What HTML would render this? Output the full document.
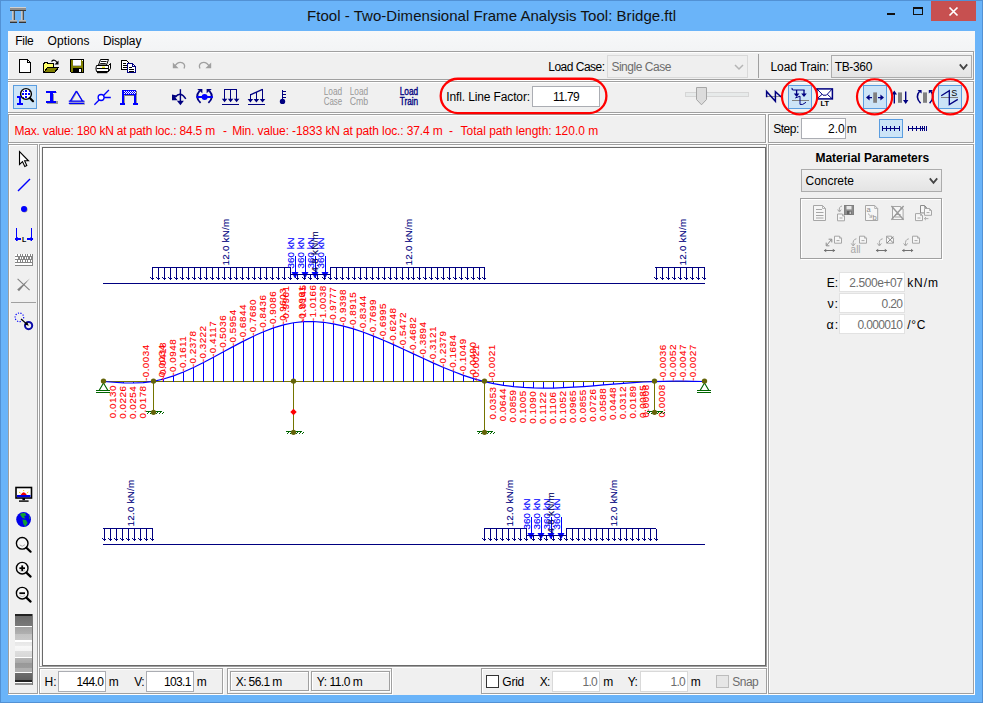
<!DOCTYPE html>
<html><head><meta charset="utf-8"><title>Ftool</title>
<style>
html,body{margin:0;padding:0;}
body{width:983px;height:703px;overflow:hidden;background:#6ab4f9;font-family:"Liberation Sans",sans-serif;}
#win{position:absolute;left:0;top:0;width:983px;height:703px;overflow:hidden;background:#6ab4f9;box-shadow:inset 0 0 0 1px #5291d4;}
#win *{position:absolute;box-sizing:border-box;}
.t{white-space:nowrap;line-height:20px;height:20px;}
.pg{border:1px solid #a0a0a0;}
.pw{border:1px solid #fff;}
.client{background:#f0f0f0;}
.menu{background:linear-gradient(#f7f8f9,#f3f4f5);}
.inp{background:#fff;border:1px solid #abadb3;}
.inpd{background:#fff;border:1px solid #d9d9d9;}
.sel{background:#cce4f7;border:1px solid #5a9de0;}
.combo{background:linear-gradient(#f2f2f2,#e4e4e4);border:1px solid #acacac;}
.combod{background:#efefef;border:1px solid #d9d9d9;}
.sunk{border:1px solid;border-color:#a0a0a0 #fff #fff #a0a0a0;}
.a{overflow:visible;}

</style></head>
<body>
<div id="win">
<span class="t" id="t1" style="top:6px;font-size:15px;color:#111;letter-spacing:0.037px;left:307.00px;">Ftool - Two-Dimensional Frame Analysis Tool: Bridge.ftl</span>
<div class="x" style="left:931px;top:1px;width:45px;height:20px;background:#c75050;"></div>
<svg class="a" style="left:931px;top:1px" width="45" height="20" viewBox="0 0 45 20" ><path d="M18.5 6.5 L26.5 14.5 M26.5 6.5 L18.5 14.5" stroke="#fff" stroke-width="1.7" fill="none"/></svg>
<div class="x" style="left:887px;top:13px;width:8px;height:2px;background:#111;"></div>
<div class="x" style="left:913px;top:7px;width:10px;height:8px;border:1px solid #111;border-top-width:2px;"></div>
<div class="client" style="left:8px;top:31px;width:967px;height:664px;"></div>
<div class="menu" style="left:8px;top:31px;width:967px;height:20px;"></div>
<span class="t" id="t2" style="top:31px;font-size:12px;color:#000;letter-spacing:-0.281px;left:15.30px;">File</span>
<span class="t" id="t3" style="top:31px;font-size:12px;color:#000;letter-spacing:0.123px;left:47.50px;">Options</span>
<span class="t" id="t4" style="top:31px;font-size:12px;color:#000;letter-spacing:-0.160px;left:103.00px;">Display</span>
<div class="pw" style="left:8px;top:52px;width:967px;height:29px"></div>
<div class="pg" style="left:7px;top:51px;width:967px;height:29px"></div>
<div class="pw" style="left:8px;top:82px;width:967px;height:32px"></div>
<div class="pg" style="left:7px;top:81px;width:967px;height:32px"></div>
<div class="pw" style="left:9px;top:115px;width:758px;height:29px"></div>
<div class="pg" style="left:8px;top:114px;width:758px;height:29px"></div>
<div class="pw" style="left:769px;top:115px;width:206px;height:29px"></div>
<div class="pg" style="left:768px;top:114px;width:206px;height:29px"></div>
<div class="pw" style="left:9px;top:145px;width:30px;height:550px"></div>
<div class="pg" style="left:8px;top:144px;width:30px;height:550px"></div>
<div class="pw" style="left:40px;top:145px;width:728px;height:523px"></div>
<div class="pg" style="left:39px;top:144px;width:728px;height:523px"></div>
<div class="pw" style="left:769px;top:145px;width:206px;height:550px"></div>
<div class="pg" style="left:768px;top:144px;width:206px;height:550px"></div>
<div class="pw" style="left:40px;top:669px;width:184px;height:26px"></div>
<div class="pg" style="left:39px;top:668px;width:184px;height:26px"></div>
<div class="pw" style="left:228px;top:669px;width:165px;height:26px"></div>
<div class="pg" style="left:227px;top:668px;width:165px;height:26px"></div>
<div class="pw" style="left:482px;top:669px;width:286px;height:26px"></div>
<div class="pg" style="left:481px;top:668px;width:286px;height:26px"></div>
<div class="x" style="left:7px;top:31px;width:1px;height:664px;background:#6ab4f9;"></div>
<div class="cv" style="left:42px;top:147px;width:724px;height:519px;background:#fff;border:1px solid #696969;"></div>
<span class="t" id="t5" style="top:121px;font-size:12px;color:#ff0000;letter-spacing:-0.195px;left:14.50px;">Max. value: 180 kN at path loc.: 84.5 m</span>
<span class="t" id="t6" style="top:121px;font-size:12px;color:#ff0000;left:223.00px;">-</span>
<span class="t" id="t7" style="top:121px;font-size:12px;color:#ff0000;letter-spacing:-0.121px;left:232.20px;">Min. value: -1833 kN at path loc.: 37.4 m</span>
<span class="t" id="t8" style="top:121px;font-size:12px;color:#ff0000;left:449.00px;">-</span>
<span class="t" id="t9" style="top:121px;font-size:12px;color:#ff0000;letter-spacing:-0.020px;left:460.60px;">Total path length: 120.0 m</span>
<span class="t" id="t10" style="top:57px;font-size:12px;color:#000;letter-spacing:-0.510px;left:548.30px;">Load Case:</span>
<div class="combod" style="left:607px;top:55px;width:141px;height:23px;"></div>
<span class="t" id="t11" style="top:57px;font-size:12px;color:#6d6d6d;letter-spacing:-0.472px;left:611.40px;">Single Case</span>
<svg class="a" style="left:733px;top:62px" width="12" height="10" viewBox="0 0 12 10" ><path d="M2 3 L6 7 L10 3" stroke="#b5b5b5" stroke-width="1.5" fill="none"/></svg>
<div class="x" style="left:758px;top:54px;width:1px;height:24px;background:#a0a0a0;"></div>
<span class="t" id="t12" style="top:57px;font-size:12px;color:#000;letter-spacing:-0.145px;left:770.60px;">Load Train:</span>
<div class="combo" style="left:831px;top:55px;width:141px;height:23px;"></div>
<span class="t" id="t13" style="top:57px;font-size:12px;color:#000;letter-spacing:-0.332px;left:834.70px;">TB-360</span>
<svg class="a" style="left:957px;top:62px" width="12" height="10" viewBox="0 0 12 10" ><path d="M2.8 2.4 L6.5 6.9 L10.2 2.4" stroke="#444" stroke-width="1.8" fill="none"/></svg>
<span class="t" id="t14" style="top:87px;font-size:12px;color:#000;letter-spacing:-0.132px;left:446.30px;">Infl. Line Factor:</span>
<div class="inp" style="left:532px;top:86px;width:68px;height:21px;"></div>
<span class="t" id="t15" style="top:87px;font-size:12px;color:#000;letter-spacing:-0.635px;left:553.00px;">11.79</span>
<svg class="a" style="left:0px;top:0px" width="983" height="703" viewBox="0 0 983 703" ><rect x="440.7" y="78.75" width="165.7" height="34.3" rx="17.15" fill="none" stroke="#ff0000" stroke-width="2.3"/></svg>
<div class="x" style="left:685px;top:92px;width:64px;height:5px;background:#e7eaea;border:1px solid #d6d6d6;"></div>
<svg class="a" style="left:696px;top:87px" width="12" height="19" viewBox="0 0 12 19" ><path d="M0.5 0.5 H10.5 V12.5 L5.5 17.8 L0.5 12.5 Z" fill="#dcdcdc" stroke="#a6a6a6" stroke-width="1"/></svg>
<div class="sel" style="left:13px;top:85px;width:24px;height:24px;"></div>
<div class="sel" style="left:788px;top:85px;width:24px;height:24px;"></div>
<div class="sel" style="left:863px;top:85px;width:24px;height:24px;"></div>
<div class="sel" style="left:938px;top:85px;width:24px;height:24px;"></div>
<span class="t" id="t16" style="top:119px;font-size:12px;color:#000;letter-spacing:-0.458px;left:773.20px;">Step:</span>
<div class="inp" style="left:801px;top:118px;width:45px;height:21px;"></div>
<span class="t" id="t17" style="top:119px;font-size:12px;color:#000;letter-spacing:0.056px;right:138.24px;">2.0</span>
<span class="t" id="t18" style="top:119px;font-size:12px;color:#000;left:846.70px;">m</span>
<div class="sel" style="left:879px;top:119px;width:24px;height:19px;"></div>
<span class="t" id="t19" style="top:148px;font-size:12px;color:#000;letter-spacing:-0.027px;font-weight:bold;left:815.50px;">Material Parameters</span>
<div class="combo" style="left:801px;top:169px;width:141px;height:23px;"></div>
<span class="t" id="t20" style="top:171px;font-size:12px;color:#000;letter-spacing:-0.029px;left:805.50px;">Concrete</span>
<svg class="a" style="left:927px;top:176px" width="12" height="10" viewBox="0 0 12 10" ><path d="M2.8 2.4 L6.5 6.9 L10.2 2.4" stroke="#444" stroke-width="1.8" fill="none"/></svg>
<div class="x" style="left:800px;top:198px;width:142px;height:61px;border:1px solid #a0a0a0;box-shadow:1px 1px 0 #fff, inset 1px 1px 0 #fff;"></div>
<div class="inpd" style="left:839px;top:272px;width:66px;height:20px;border-color:#e2e2e2;"></div>
<span class="t" id="t21" style="top:273px;font-size:12px;color:#000;right:144.90px;">E:</span>
<span class="t" id="t22" style="top:273px;font-size:12px;color:#6d6d6d;letter-spacing:-0.420px;right:80.42px;">2.500e+07</span>
<span class="t" id="t23" style="top:273px;font-size:12px;color:#000;letter-spacing:0.900px;left:907.20px;">kN/m</span>
<div class="inpd" style="left:839px;top:293px;width:66px;height:20px;border-color:#e2e2e2;"></div>
<span class="t" id="t24" style="top:294px;font-size:12.5px;color:#000;letter-spacing:0.900px;right:144.00px;">&#957;:</span>
<span class="t" id="t25" style="top:294px;font-size:12px;color:#6d6d6d;letter-spacing:-0.653px;right:80.65px;">0.20</span>
<div class="inpd" style="left:839px;top:314px;width:66px;height:20px;border-color:#e2e2e2;"></div>
<span class="t" id="t26" style="top:315px;font-size:12.5px;color:#000;letter-spacing:0.900px;right:144.00px;">&#945;:</span>
<span class="t" id="t27" style="top:315px;font-size:12px;color:#6d6d6d;letter-spacing:-0.638px;right:80.64px;">0.000010</span>
<span class="t" id="t28" style="top:315px;font-size:12px;color:#000;letter-spacing:0.744px;left:907.20px;">/&deg;C</span>
<span class="t" id="t29" style="top:672px;font-size:12px;color:#000;left:44.50px;">H:</span>
<div class="inp" style="left:58px;top:671px;width:48px;height:21px;"></div>
<span class="t" id="t30" style="top:672px;font-size:12px;color:#000;letter-spacing:-0.700px;right:879.90px;">144.0</span>
<span class="t" id="t31" style="top:672px;font-size:12px;color:#000;left:108.80px;">m</span>
<span class="t" id="t32" style="top:672px;font-size:12px;color:#000;letter-spacing:-0.700px;left:134.30px;">V:</span>
<div class="inp" style="left:146px;top:671px;width:48px;height:21px;"></div>
<span class="t" id="t33" style="top:672px;font-size:12px;color:#000;letter-spacing:-0.700px;right:792.40px;">103.1</span>
<span class="t" id="t34" style="top:672px;font-size:12px;color:#000;left:196.70px;">m</span>
<div class="pw" style="left:231px;top:672px;width:79px;height:20px"></div>
<div class="pg" style="left:230px;top:671px;width:79px;height:20px"></div>
<span class="t" id="t35" style="top:672px;font-size:12px;color:#000;letter-spacing:-0.620px;left:235.80px;">X: 56.1 m</span>
<div class="pw" style="left:312px;top:672px;width:79px;height:20px"></div>
<div class="pg" style="left:311px;top:671px;width:79px;height:20px"></div>
<span class="t" id="t36" style="top:672px;font-size:12px;color:#000;letter-spacing:-0.477px;left:316.80px;">Y: 11.0 m</span>
<div class="x" style="left:486px;top:675px;width:13px;height:13px;background:#fff;border:1px solid #333;"></div>
<span class="t" id="t37" style="top:672px;font-size:12px;color:#000;letter-spacing:-0.224px;left:502.30px;">Grid</span>
<span class="t" id="t38" style="top:672px;font-size:12px;color:#000;letter-spacing:-0.700px;left:539.80px;">X:</span>
<div class="inpd" style="left:552px;top:671px;width:48px;height:21px;"></div>
<span class="t" id="t39" style="top:672px;font-size:12px;color:#6d6d6d;letter-spacing:-0.700px;right:385.90px;">1.0</span>
<span class="t" id="t40" style="top:672px;font-size:12px;color:#000;left:603.30px;">m</span>
<span class="t" id="t41" style="top:672px;font-size:12px;color:#000;letter-spacing:-0.688px;left:627.80px;">Y:</span>
<div class="inpd" style="left:640px;top:671px;width:48px;height:21px;"></div>
<span class="t" id="t42" style="top:672px;font-size:12px;color:#6d6d6d;letter-spacing:-0.700px;right:297.90px;">1.0</span>
<span class="t" id="t43" style="top:672px;font-size:12px;color:#000;left:690.80px;">m</span>
<div class="x" style="left:716px;top:675px;width:13px;height:13px;background:#e6e6e6;border:1px solid #bcbcbc;"></div>
<span class="t" id="t44" style="top:672px;font-size:12px;color:#6d6d6d;letter-spacing:-0.510px;left:732.30px;">Snap</span>
<div style="left:15px;top:614px;width:18px;height:71px;background:linear-gradient(to bottom,#222 0.0%,#222 3.5%,#6c6c6c 3.5%,#7a7a7a 17.0%,#fff 17.0%,#fff 19.0%,#a4a4a4 19.0%,#b0b0b0 28.0%,#c2c2c2 28.0%,#c8c8c8 37.0%,#fff 37.0%,#fff 39.0%,#e6e6e6 39.0%,#ececec 45.0%,#f8f8f8 45.0%,#f4f4f4 52.0%,#dedede 52.0%,#d8d8d8 60.0%,#fff 60.0%,#fff 62.0%,#b4b4b4 62.0%,#a8a8a8 69.0%,#989898 69.0%,#9c9c9c 76.0%,#b0b0b0 76.0%,#b0b0b0 81.0%,#fff 81.0%,#fff 83.0%,#6e6e6e 83.0%,#606060 93.0%,#222 93.0%,#222 95.5%,#fff 95.5%,#fff 97.5%,#909090 97.5%,#909090 100.0%);border-right:1px solid #7a7a7a;"></div>
<svg class="a" style="left:0;top:0" width="983" height="703" viewBox="0 0 983 703"><g shape-rendering="crispEdges"><rect x="10" y="7" width="16" height="4" fill="#8e8e8e" stroke="none" stroke-width="1" /><rect x="10" y="7" width="16" height="1" fill="#d0d0d0" stroke="none" stroke-width="1" /><rect x="10" y="10" width="16" height="1" fill="#3a3a3a" stroke="none" stroke-width="1" /><rect x="12" y="11" width="3.2" height="9" fill="#a2a2a2" stroke="none" stroke-width="1" /><rect x="12" y="11" width="1" height="9" fill="#c8c8c8" stroke="none" stroke-width="1" /><rect x="14.4" y="11" width="0.8" height="9" fill="#505050" stroke="none" stroke-width="1" /><rect x="21" y="11" width="3.2" height="9" fill="#a2a2a2" stroke="none" stroke-width="1" /><rect x="21" y="11" width="1" height="9" fill="#c8c8c8" stroke="none" stroke-width="1" /><rect x="23.4" y="11" width="0.8" height="9" fill="#505050" stroke="none" stroke-width="1" /><rect x="10" y="20" width="7" height="3" fill="#8a8a8a" stroke="none" stroke-width="1" /><rect x="19" y="20" width="7" height="3" fill="#8a8a8a" stroke="none" stroke-width="1" /><rect x="10" y="22" width="7" height="1" fill="#333" stroke="none" stroke-width="1" /><rect x="19" y="22" width="7" height="1" fill="#333" stroke="none" stroke-width="1" /><rect x="10" y="20" width="7" height="1" fill="#bbb" stroke="none" stroke-width="1" /><rect x="19" y="20" width="7" height="1" fill="#bbb" stroke="none" stroke-width="1" /></g><g shape-rendering="crispEdges"><path d="M19.5 59.5 H27.5 L30.5 62.5 V72.5 H19.5 Z" stroke="#000" fill="#fff" stroke-width="1" /><path d="M27.5 59.5 V62.5 H30.5" stroke="#000" fill="none" stroke-width="1" /><path d="M43.5 72.5 V63.5 H44.5 V62.5 H47.5 V63.5 H53.5 V67" stroke="#000" fill="#ffff66" stroke-width="1" /><path d="M44 72.5 L47.5 67.5 H58.5 L54.5 72.5 Z" stroke="#000" fill="#808000" stroke-width="1" /></g><path d="M51.5 61.5 Q54.5 58.5 57 62.5" stroke="#000" fill="none" stroke-width="1.2" /><path d="M58.5 60.5 V64.5 H54.5 Z" stroke="none" fill="#000" stroke-width="1" /><g shape-rendering="crispEdges"><path d="M70.5 59.5 H83.5 V72.5 H71.5 L70.5 71.5 Z" stroke="#000" fill="#808000" stroke-width="1" /><rect x="73" y="60" width="8" height="6" fill="#fff" stroke="none" stroke-width="1" /><rect x="73" y="65" width="8" height="1" fill="#c0c0c0" stroke="none" stroke-width="1" /><rect x="73" y="68" width="9" height="5" fill="#000" stroke="none" stroke-width="1" /><rect x="79" y="69" width="2" height="3" fill="#fff" stroke="none" stroke-width="1" /><rect x="82" y="60" width="1" height="1" fill="#fff" stroke="none" stroke-width="1" /></g><path d="M98.5 65 L100.5 59.5 H108.5 L106.5 65 Z" stroke="#000" fill="#fff" stroke-width="1" /><path d="M100.8 61.5 H106.5 M100.2 63.5 H105.8" stroke="#000" fill="none" stroke-width="0.9" /><path d="M96.5 65.5 H108.5 L110.5 63.5 V68.5 L108.5 71.5 H96.5 Q95.3 68.5 96.5 65.5 Z" stroke="#000" fill="#fff" stroke-width="1" /><path d="M96.5 68.5 H108.5 M97 71.5 H108 L109.5 69.5" stroke="#000" fill="none" stroke-width="1" /><path d="M97 72.6 H107.5" stroke="#000" fill="none" stroke-width="1.2" /><rect x="102" y="66.6" width="3" height="1.3" fill="#e6e600" stroke="none" stroke-width="1" /><path d="M108.5 65.5 V71.5 M108.5 65.5 L110.5 63.5" stroke="#000" fill="none" stroke-width="0.9" /><g shape-rendering="crispEdges"><path d="M121.5 60.5 H126.5 L128.5 62.5 V69.5 H121.5 Z" stroke="#000" fill="#fff" stroke-width="1" /><path d="M123 63.5 H126 M123 65.5 H127 M123 67.5 H127" stroke="#000" fill="none" stroke-width="1" /><path d="M127.5 63.5 H132.5 L135.5 66.5 V72.5 H127.5 Z" stroke="#000080" fill="#fff" stroke-width="1" /><path d="M132.5 63.5 V66.5 H135.5" stroke="#000080" fill="none" stroke-width="1" /><path d="M129 67.5 H132 M129 69.5 H134 M129 71 H134" stroke="#000" fill="none" stroke-width="1" /></g><path d="M174.5 66.5 Q178 61 182.5 62.8 Q185.8 64.5 184 68.5" stroke="#a0a0a0" fill="none" stroke-width="1.3" /><path d="M172.8 62.5 V68.3 H178.6 Z" stroke="none" fill="#a0a0a0" stroke-width="1" /><path d="M209.5 66.5 Q206 61 201.5 62.8 Q198.2 64.5 200 68.5" stroke="#a0a0a0" fill="none" stroke-width="1.3" /><path d="M211.2 62.5 V68.3 H205.4 Z" stroke="none" fill="#a0a0a0" stroke-width="1" /><circle cx="26" cy="94" r="5.4" fill="#fff" stroke="#000" stroke-width="1.4" /><g shape-rendering="crispEdges"><rect x="22.5" y="90.5" width="1.5" height="1.5" fill="#0000ff" stroke="none" stroke-width="1" /><rect x="22" y="93" width="2.4" height="2.4" fill="#0000ff" stroke="none" stroke-width="1" /><rect x="22.5" y="96.5" width="1.5" height="1.5" fill="#0000ff" stroke="none" stroke-width="1" /><rect x="25" y="90" width="2.4" height="2.4" fill="#0000ff" stroke="none" stroke-width="1" /><rect x="25" y="93" width="2.4" height="2.4" fill="#0000ff" stroke="none" stroke-width="1" /><rect x="25" y="96" width="2.4" height="2.4" fill="#0000ff" stroke="none" stroke-width="1" /><rect x="28.5" y="90.5" width="1.5" height="1.5" fill="#0000ff" stroke="none" stroke-width="1" /><rect x="28" y="93" width="2.4" height="2.4" fill="#0000ff" stroke="none" stroke-width="1" /><rect x="28.5" y="96.5" width="1.5" height="1.5" fill="#0000ff" stroke="none" stroke-width="1" /></g><path d="M29.8 98 L33 101.2" stroke="#000" fill="none" stroke-width="2.2" stroke-linecap="round"/><g shape-rendering="crispEdges"><rect x="17" y="96" width="4" height="2" fill="#0000ff" stroke="none" stroke-width="1" /><rect x="19" y="96" width="2" height="8" fill="#0000ff" stroke="none" stroke-width="1" /><rect x="17" y="103" width="6" height="2" fill="#0000ff" stroke="none" stroke-width="1" /><rect x="47" y="92" width="10" height="1" fill="#9a9a9a" stroke="none" stroke-width="1" /><rect x="50.5" y="94" width="3.5" height="8" fill="#9a9a9a" stroke="none" stroke-width="1" /><rect x="47" y="101" width="10.5" height="2.6" fill="#9a9a9a" stroke="none" stroke-width="1" /><rect x="46" y="91" width="10.4" height="2.4" fill="#0000ff" stroke="none" stroke-width="1" /><rect x="49.6" y="91" width="3.6" height="11" fill="#0000ff" stroke="none" stroke-width="1" /><rect x="46" y="100.6" width="10.4" height="2.4" fill="#0000ff" stroke="none" stroke-width="1" /></g><path d="M76.9 91.8 L71 101.8 M76.9 91.8 L82.9 101.8 M69.4 101.9 H84.9 M69.4 104.2 H84.9" stroke="#9a9a9a" fill="none" stroke-width="1.2" /><path d="M76.4 91 L70.4 101 M76.4 91 L82.4 101 M68.8 101.1 H84.3 M68.8 103.4 H84.3" stroke="#0000ff" fill="none" stroke-width="1.4" /><path d="M94.4 104.8 L108.9 90 M104 97.5 H110.8" stroke="#0000ff" fill="none" stroke-width="1.3" /><circle cx="101.1" cy="97.5" r="3" fill="#fff" stroke="#0000ff" stroke-width="1.3" /><g shape-rendering="crispEdges"><rect x="123" y="91" width="14" height="4.5" fill="#777" stroke="none" stroke-width="1" /><rect x="122" y="90" width="14" height="4.7" fill="#0000ff" stroke="none" stroke-width="1" /><rect x="123.5" y="91.2" width="1" height="1" fill="#fff" stroke="none" stroke-width="1" /><rect x="124.5" y="92.2" width="1" height="1" fill="#fff" stroke="none" stroke-width="1" /><rect x="123.5" y="93.2" width="1" height="1" fill="#fff" stroke="none" stroke-width="1" /><rect x="125.5" y="91.2" width="1" height="1" fill="#fff" stroke="none" stroke-width="1" /><rect x="126.5" y="92.2" width="1" height="1" fill="#fff" stroke="none" stroke-width="1" /><rect x="125.5" y="93.2" width="1" height="1" fill="#fff" stroke="none" stroke-width="1" /><rect x="127.5" y="91.2" width="1" height="1" fill="#fff" stroke="none" stroke-width="1" /><rect x="128.5" y="92.2" width="1" height="1" fill="#fff" stroke="none" stroke-width="1" /><rect x="127.5" y="93.2" width="1" height="1" fill="#fff" stroke="none" stroke-width="1" /><rect x="129.5" y="91.2" width="1" height="1" fill="#fff" stroke="none" stroke-width="1" /><rect x="130.5" y="92.2" width="1" height="1" fill="#fff" stroke="none" stroke-width="1" /><rect x="129.5" y="93.2" width="1" height="1" fill="#fff" stroke="none" stroke-width="1" /><rect x="131.5" y="91.2" width="1" height="1" fill="#fff" stroke="none" stroke-width="1" /><rect x="132.5" y="92.2" width="1" height="1" fill="#fff" stroke="none" stroke-width="1" /><rect x="131.5" y="93.2" width="1" height="1" fill="#fff" stroke="none" stroke-width="1" /><rect x="133.5" y="91.2" width="1" height="1" fill="#fff" stroke="none" stroke-width="1" /><rect x="134.5" y="92.2" width="1" height="1" fill="#fff" stroke="none" stroke-width="1" /><rect x="133.5" y="93.2" width="1" height="1" fill="#fff" stroke="none" stroke-width="1" /><rect x="122.4" y="94" width="1.6" height="9.5" fill="#0000ff" stroke="none" stroke-width="1" /><rect x="134.2" y="94" width="1.8" height="9.5" fill="#0000ff" stroke="none" stroke-width="1" /><rect x="124" y="95" width="1" height="8" fill="#999" stroke="none" stroke-width="1" /><rect x="136" y="95" width="1" height="8" fill="#999" stroke="none" stroke-width="1" /><rect x="120" y="103" width="5.2" height="1.6" fill="#0000ff" stroke="none" stroke-width="1" /><rect x="133" y="103" width="5.2" height="1.6" fill="#0000ff" stroke="none" stroke-width="1" /></g><path d="M180.4 89.2 V101.5" stroke="#000080" fill="none" stroke-width="1.4" /><path d="M176.9 100.8 H183.9 L180.4 105.2 Z" stroke="none" fill="#000080" stroke-width="1" /><path d="M175.2 97.2 Q180.4 90.5 185.8 98.8" stroke="#000080" fill="none" stroke-width="1.5" /><path d="M172 94.6 L176.8 95.6 L175.2 97.2 L177.6 100.2 H172 Z" stroke="none" fill="#000080" stroke-width="1" /><path d="M200.6 102.8 Q194.2 97 199.6 90.9" stroke="#000080" fill="none" stroke-width="1.8" /><path d="M208.4 102.8 Q214.8 97 209.4 90.9" stroke="#000080" fill="none" stroke-width="1.8" /><path d="M197.2 89 H202.4 V93.2 Z" stroke="none" fill="#000080" stroke-width="1" /><path d="M211.8 89 H206.6 V93.2 Z" stroke="none" fill="#000080" stroke-width="1" /><path d="M196.6 97 H212.8" stroke="#0000ff" fill="none" stroke-width="2" /><circle cx="204.6" cy="97" r="3" fill="#0000ff" stroke="none" stroke-width="1" /><g shape-rendering="crispEdges"><rect x="224" y="89" width="13" height="1.2" fill="#000080" stroke="none" stroke-width="1" /><rect x="224" y="89" width="1.3" height="11" fill="#000080" stroke="none" stroke-width="1" /><rect x="230" y="89" width="1.3" height="11" fill="#000080" stroke="none" stroke-width="1" /><rect x="236" y="89" width="1.3" height="11" fill="#000080" stroke="none" stroke-width="1" /><rect x="222" y="104" width="17" height="1.2" fill="#000080" stroke="none" stroke-width="1" /></g><path d="M221.79999999999998 98.8 H227.4 L224.6 102.2 Z" stroke="none" fill="#000080" stroke-width="1" /><path d="M227.79999999999998 98.8 H233.4 L230.6 102.2 Z" stroke="none" fill="#000080" stroke-width="1" /><path d="M233.79999999999998 98.8 H239.4 L236.6 102.2 Z" stroke="none" fill="#000080" stroke-width="1" /><path d="M250.4 94.8 L262.5 89.4" stroke="#000080" fill="none" stroke-width="1.4" /><g shape-rendering="crispEdges"><rect x="249.8" y="94.4" width="1.3" height="6" fill="#000080" stroke="none" stroke-width="1" /><rect x="255.8" y="91.7" width="1.3" height="8.5" fill="#000080" stroke="none" stroke-width="1" /><rect x="261.8" y="89.2" width="1.3" height="11" fill="#000080" stroke="none" stroke-width="1" /><rect x="248" y="104" width="17" height="1.2" fill="#000080" stroke="none" stroke-width="1" /></g><path d="M247.6 99 H253.20000000000002 L250.4 102.4 Z" stroke="none" fill="#000080" stroke-width="1" /><path d="M253.59999999999997 99 H259.2 L256.4 102.4 Z" stroke="none" fill="#000080" stroke-width="1" /><path d="M259.7 99 H265.3 L262.5 102.4 Z" stroke="none" fill="#000080" stroke-width="1" /><g shape-rendering="crispEdges"><rect x="281.7" y="90" width="1.3" height="10" fill="#000080" stroke="none" stroke-width="1" /><rect x="282" y="91" width="4" height="1.1" fill="#000080" stroke="none" stroke-width="1" /><rect x="282" y="94" width="4" height="1.1" fill="#000080" stroke="none" stroke-width="1" /><rect x="282" y="97" width="4" height="1.1" fill="#000080" stroke="none" stroke-width="1" /></g><circle cx="282.5" cy="101.4" r="2.7" fill="#000080" stroke="none" stroke-width="1" /><text x="323.7" y="95.4" font-family="Liberation Sans, sans-serif" font-size="10.5" fill="#989898"  textLength="18.5" lengthAdjust="spacingAndGlyphs">Load</text><text x="323.7" y="105.4" font-family="Liberation Sans, sans-serif" font-size="10.5" fill="#989898"  textLength="18.5" lengthAdjust="spacingAndGlyphs">Case</text><text x="349.7" y="95.4" font-family="Liberation Sans, sans-serif" font-size="10.5" fill="#989898"  textLength="18.5" lengthAdjust="spacingAndGlyphs">Load</text><text x="349.7" y="105.4" font-family="Liberation Sans, sans-serif" font-size="10.5" fill="#989898"  textLength="18.5" lengthAdjust="spacingAndGlyphs">Cmb</text><text x="399.7" y="95.4" font-family="Liberation Sans, sans-serif" font-size="10.5" fill="#000080" stroke="#000080" stroke-width="0.35" textLength="18.5" lengthAdjust="spacingAndGlyphs">Load</text><text x="399.7" y="105.4" font-family="Liberation Sans, sans-serif" font-size="10.5" fill="#000080" stroke="#000080" stroke-width="0.35" textLength="18.5" lengthAdjust="spacingAndGlyphs">Train</text><path d="M766.5 96.5 H781" stroke="#909090" fill="none" stroke-width="1" /><path d="M766.6 97.2 V91.4 L775.4 101.3 V91.6 L781.2 97" stroke="#000080" fill="none" stroke-width="1.5" stroke-linejoin="miter"/><path d="M792.2 88 Q791.6 90 793.6 90 H804.6" stroke="#000080" fill="none" stroke-width="1.2" /><path d="M796.6 90 V95 M804 90 V95" stroke="#000080" fill="none" stroke-width="1.3" /><path d="M793.8 93.6 H799.4 L796.6 97 Z M801.2 93.6 H806.8 L804 97 Z" stroke="none" fill="#000080" stroke-width="1" /><path d="M792 100.5 H809" stroke="#808080" fill="none" stroke-width="1" /><path d="M795.2 98 L800 96.2 V104.4 H802.7 L806 102.3" stroke="#000080" fill="none" stroke-width="1" /><rect x="816.8" y="88.9" width="15.6" height="10" fill="#fff" stroke="#000080" stroke-width="1.5" /><path d="M817 89 L823 95.2 H826.4 L832.2 89 M817 98.8 L822 94.4 M832.2 98.8 L827.4 94.4" stroke="#000080" fill="none" stroke-width="1" /><text x="820.4" y="106" font-family="Liberation Sans, sans-serif" font-size="6.5" font-weight="bold" fill="#000" textLength="8.6" lengthAdjust="spacingAndGlyphs">LT</text><rect x="873.2" y="92.4" width="3.8" height="10.4" fill="#808080" stroke="none" stroke-width="1" /><path d="M866 97.6 L869.6 94.6 V100.6 Z M884 97.6 L880.4 94.6 V100.6 Z" stroke="none" fill="#000080" stroke-width="1" /><path d="M869 97.6 H872 M878 97.6 H881" stroke="#000080" fill="none" stroke-width="1.4" /><rect x="898" y="92.4" width="4" height="10.4" fill="#808080" stroke="none" stroke-width="1" /><path d="M894.3 92 V103.4 M905.7 91.4 V102.6" stroke="#000080" fill="none" stroke-width="1.4" /><path d="M891.6 94.6 L894.3 90.6 L897 94.6 Z M903 100 L905.7 104 L908.4 100 Z" stroke="none" fill="#000080" stroke-width="1" /><rect x="923" y="92.4" width="4" height="10.4" fill="#808080" stroke="none" stroke-width="1" /><path d="M920.6 103.2 Q914.6 97 919.6 91.2" stroke="#000080" fill="none" stroke-width="1.5" /><path d="M929.6 103.2 Q935.6 97 930.8 91.2" stroke="#000080" fill="none" stroke-width="1.5" /><path d="M917.4 90 H921.6 V93.6 Z M933 90 H928.8 V93.6 Z" stroke="none" fill="#000080" stroke-width="1" /><path d="M941 97.5 H958" stroke="#808080" fill="none" stroke-width="1" /><path d="M941.2 95.8 L949.3 90.6 V104.6 L957.8 99.4" stroke="#000080" fill="none" stroke-width="1.3" /><text x="951.3" y="95.6" font-family="Liberation Sans, sans-serif" font-size="9" fill="#000">S</text><circle cx="799.6" cy="96.85" r="17.6" fill="none" stroke="#ff0000" stroke-width="2.2" /><circle cx="874.6" cy="96.85" r="17.6" fill="none" stroke="#ff0000" stroke-width="2.2" /><circle cx="950.2" cy="96.85" r="17.6" fill="none" stroke="#ff0000" stroke-width="2.2" /><g shape-rendering="crispEdges"><path d="M882.5 128.5 H899.5" stroke="#000080" fill="none" stroke-width="1" /><path d="M882.5 126 V131" stroke="#000080" fill="none" stroke-width="1" /><path d="M886.5 126 V131" stroke="#000080" fill="none" stroke-width="1" /><path d="M890.5 126 V131" stroke="#000080" fill="none" stroke-width="1" /><path d="M894.5 126 V131" stroke="#000080" fill="none" stroke-width="1" /><path d="M899.5 126 V131" stroke="#000080" fill="none" stroke-width="1" /><path d="M908.5 128.5 H924.5" stroke="#000080" fill="none" stroke-width="1" /><path d="M908.5 126 V131" stroke="#000080" fill="none" stroke-width="1" /><path d="M912.5 126 V131" stroke="#000080" fill="none" stroke-width="1" /><path d="M916.5 126 V131" stroke="#000080" fill="none" stroke-width="1" /><path d="M920.5 126 V131" stroke="#000080" fill="none" stroke-width="1" /><path d="M922.5 126 V131" stroke="#000080" fill="none" stroke-width="1" /><path d="M924.5 126 V131" stroke="#000080" fill="none" stroke-width="1" /><path d="M926.5 126 V131" stroke="#000080" fill="none" stroke-width="1" /></g><path d="M19.5 151.5 V164.5 L22.5 161.6 L24.8 166.6 L26.8 165.6 L24.6 160.8 H28.5 Z" stroke="#000" fill="#fff" stroke-width="1.1" /><path d="M18 191 L30 179" stroke="#0000ff" fill="none" stroke-width="1.4" /><circle cx="24.6" cy="209.6" r="3" fill="#9a9a9a" stroke="none" stroke-width="1" /><circle cx="24" cy="209" r="3" fill="#0000ff" stroke="none" stroke-width="1" /><g shape-rendering="crispEdges"><rect x="16" y="228" width="1.4" height="13" fill="#0000ff" stroke="none" stroke-width="1" /><rect x="31" y="228" width="1.4" height="13" fill="#0000ff" stroke="none" stroke-width="1" /><rect x="15" y="238.4" width="6" height="1.2" fill="#0000ff" stroke="none" stroke-width="1" /><rect x="27" y="238.4" width="6" height="1.2" fill="#0000ff" stroke="none" stroke-width="1" /></g><path d="M15 239 L18 237 V241 Z M33.4 239 L30.4 237 V241 Z" stroke="none" fill="#0000ff" stroke-width="1" /><text x="22" y="241.5" font-family="Liberation Sans, sans-serif" font-size="7" font-weight="bold" fill="#000">L</text><g shape-rendering="crispEdges"><rect x="15" y="254" width="18" height="12" fill="#fff" stroke="none" stroke-width="1" /><rect x="15" y="256" width="18" height="1" fill="#858585" stroke="none" stroke-width="1" /><rect x="15" y="259" width="18" height="1" fill="#858585" stroke="none" stroke-width="1" /><rect x="15" y="262" width="18" height="1" fill="#858585" stroke="none" stroke-width="1" /><rect x="15" y="265" width="18" height="1" fill="#858585" stroke="none" stroke-width="1" /><rect x="32" y="254" width="1" height="12" fill="#858585" stroke="none" stroke-width="1" /><rect x="17.0" y="254" width="1" height="2" fill="#858585" stroke="none" stroke-width="1" /><rect x="19.5" y="254" width="1" height="2" fill="#858585" stroke="none" stroke-width="1" /><rect x="22.0" y="254" width="1" height="2" fill="#858585" stroke="none" stroke-width="1" /><rect x="24.5" y="254" width="1" height="2" fill="#858585" stroke="none" stroke-width="1" /><rect x="27.0" y="254" width="1" height="2" fill="#858585" stroke="none" stroke-width="1" /><rect x="29.5" y="254" width="1" height="2" fill="#858585" stroke="none" stroke-width="1" /><rect x="32.0" y="254" width="1" height="2" fill="#858585" stroke="none" stroke-width="1" /><rect x="18.2" y="257" width="1.3" height="2" fill="#858585" stroke="none" stroke-width="1" /><rect x="17.0" y="260" width="1.3" height="2" fill="#858585" stroke="none" stroke-width="1" /><rect x="20.7" y="257" width="1.3" height="2" fill="#858585" stroke="none" stroke-width="1" /><rect x="19.5" y="260" width="1.3" height="2" fill="#858585" stroke="none" stroke-width="1" /><rect x="23.2" y="257" width="1.3" height="2" fill="#858585" stroke="none" stroke-width="1" /><rect x="22.0" y="260" width="1.3" height="2" fill="#858585" stroke="none" stroke-width="1" /><rect x="25.7" y="257" width="1.3" height="2" fill="#858585" stroke="none" stroke-width="1" /><rect x="24.5" y="260" width="1.3" height="2" fill="#858585" stroke="none" stroke-width="1" /><rect x="28.2" y="257" width="1.3" height="2" fill="#858585" stroke="none" stroke-width="1" /><rect x="27.0" y="260" width="1.3" height="2" fill="#858585" stroke="none" stroke-width="1" /><rect x="30.7" y="257" width="1.3" height="2" fill="#858585" stroke="none" stroke-width="1" /><rect x="29.5" y="260" width="1.3" height="2" fill="#858585" stroke="none" stroke-width="1" /></g><path d="M17.6 278.8 L29.6 290.2" stroke="#808080" fill="none" stroke-width="1.1" /><path d="M29.8 278.4 L24 283.4 L17.2 289.4 L19 291.2 L24.8 284.4 Z" stroke="none" fill="#808080" stroke-width="1" /><rect x="11" y="302" width="25" height="1" fill="#a0a0a0" stroke="none" stroke-width="1" /><circle cx="19.4" cy="317.3" r="4.3" fill="none" stroke="#0000ff" stroke-width="1.1" stroke-dasharray="1.2 1.4"/><circle cx="28.6" cy="325.6" r="3.6" fill="none" stroke="#0a0aa8" stroke-width="2" /><path d="M21 319 L27.4 324.6" stroke="#000" fill="none" stroke-width="1.2" /><path d="M28.8 325.8 L24.6 324.4 L27 321.8 Z" stroke="none" fill="#000" stroke-width="1" /><rect x="16" y="487.5" width="15.5" height="10.5" fill="#fff" stroke="#000" stroke-width="1.6" /><rect x="17" y="495" width="13.5" height="2.2" fill="#0000e0" stroke="none" stroke-width="1" /><path d="M20.6 495 Q23.7 489.6 26.8 495 Z" stroke="none" fill="#f00000" stroke-width="1" /><path d="M19 492 L20.6 493.2 M23.7 490 V491 M28.4 492 L26.8 493.2" stroke="#f0d000" fill="none" stroke-width="1" /><rect x="22.4" y="498" width="2.6" height="2.2" fill="#000" stroke="none" stroke-width="1" /><rect x="19" y="500.4" width="9.6" height="1.4" fill="#000" stroke="none" stroke-width="1" /><circle cx="23.6" cy="519.5" r="7.4" fill="#0000e8" stroke="none" stroke-width="1" /><path d="M20 514 Q22 512.6 25 513 L26.4 515.6 L24 516 L25.4 518.4 L22.6 518 L21 516 Z" stroke="none" fill="#10a030" stroke-width="1" /><path d="M22.4 519.4 L26 520 L27.6 523 L25.4 526.4 L23.4 524 Z" stroke="none" fill="#10a030" stroke-width="1" /><path d="M28.6 515 L30.4 518 L29.6 519.4 Z" stroke="none" fill="#10a030" stroke-width="1" /><circle cx="22.2" cy="543.3" r="5.8" fill="#f8f8f8" stroke="#000" stroke-width="1.4" /><path d="M26.4 547.6999999999999 L30.6 551.6999999999999" stroke="#000" fill="none" stroke-width="2.2" stroke-linecap="round"/><path d="M19.6 544.9 Q22.2 547.6999999999999 25 544.6999999999999" stroke="#b0b0b0" fill="none" stroke-width="1" /><circle cx="22.2" cy="568.2" r="5.8" fill="#f8f8f8" stroke="#000" stroke-width="1.4" /><path d="M26.4 572.6 L30.6 576.6" stroke="#000" fill="none" stroke-width="2.2" stroke-linecap="round"/><path d="M19.4 568.2 H25" stroke="#000" fill="none" stroke-width="1.8" /><path d="M22.2 565.4000000000001 V571.0" stroke="#000" fill="none" stroke-width="1.8" /><path d="M19.6 570.6 Q22.2 572.8000000000001 25 570.4000000000001" stroke="#b0b0b0" fill="none" stroke-width="0.8" /><circle cx="22.2" cy="593.2" r="5.8" fill="#f8f8f8" stroke="#000" stroke-width="1.4" /><path d="M26.4 597.6 L30.6 601.6" stroke="#000" fill="none" stroke-width="2.2" stroke-linecap="round"/><path d="M19.4 593.2 H25" stroke="#000" fill="none" stroke-width="1.8" /><path d="M19.6 595.6 Q22.2 597.8000000000001 25 595.4000000000001" stroke="#b0b0b0" fill="none" stroke-width="0.8" /><path d="M813.5 205.5 H822.5 L825.5 208.5 V220.5 H813.5 Z" stroke="#a6a6a6" fill="#f6f6f6" stroke-width="1" /><path d="M822.5 205.5 V208.5 H825.5" stroke="#a6a6a6" fill="none" stroke-width="0.8" /><path d="M816 209.5 H822 M816 212.5 H823.5 M816 215.5 H823.5 M816 218 H823.5" stroke="#a6a6a6" fill="none" stroke-width="1" /><rect x="844.5" y="205.5" width="9" height="9" fill="#8c8c8c" stroke="#808080" stroke-width="1" /><rect x="846.5" y="206" width="5" height="3.4" fill="#e8e8e8" stroke="none" stroke-width="1" /><rect x="847" y="211" width="4.4" height="3.4" fill="#606060" stroke="none" stroke-width="1" /><rect x="849.6" y="211.6" width="1.2" height="2.4" fill="#ddd" stroke="none" stroke-width="1" /><path d="M837.5 214 H842.5 L844.5 216 V220.8 H837.5 Z" stroke="#a6a6a6" fill="#f6f6f6" stroke-width="1" /><path d="M842.5 214 V216 H844.5" stroke="#a6a6a6" fill="none" stroke-width="0.8" /><path d="M839.5 218 H842.5" stroke="#a6a6a6" fill="none" stroke-width="1" /><path d="M842 206 Q838.6 206.6 839.4 211 M837.6 209.6 L839.5 212 L841.2 209.6" stroke="#a6a6a6" fill="none" stroke-width="1" /><path d="M865.5 205.5 H874.7 L877.7 208.5 V220.5 H865.5 Z" stroke="#a6a6a6" fill="#f6f6f6" stroke-width="1" /><path d="M874.7 205.5 V208.5 H877.7" stroke="#a6a6a6" fill="none" stroke-width="0.8" /><text x="866.6" y="212.4" font-family="Liberation Sans, sans-serif" font-size="7.5" fill="#8a8a8a">a</text><text x="872.4" y="219.6" font-family="Liberation Sans, sans-serif" font-size="7.5" fill="#8a8a8a">b</text><path d="M868 213.6 L871.4 216.8 M869.4 217.2 H871.8 V214.8" stroke="#a6a6a6" fill="none" stroke-width="0.9" /><path d="M892.5 206.5 H900.6 L903.1 209.0 V219.5 H892.5 Z" stroke="#a6a6a6" fill="#f6f6f6" stroke-width="1" /><path d="M900.6 206.5 V209.0 H903.1" stroke="#a6a6a6" fill="none" stroke-width="0.8" /><path d="M895 214.5 H900.6 M895 217 H900.6" stroke="#a6a6a6" fill="none" stroke-width="1" /><path d="M891.4 206 L903.6 219.8 M903.6 206 L891.4 219.8" stroke="#9a9a9a" fill="none" stroke-width="1.4" /><path d="M920.5 205.5 H924.5 L926.5 207.5 V212.9 H920.5 Z" stroke="#8a8a8a" fill="#f6f6f6" stroke-width="1" /><path d="M924.5 205.5 V207.5 H926.5" stroke="#8a8a8a" fill="none" stroke-width="0.8" /><path d="M924.5 208.5 H929.5 L931.5 210.5 V215.3 H924.5 Z" stroke="#a6a6a6" fill="#f6f6f6" stroke-width="1" /><path d="M929.5 208.5 V210.5 H931.5" stroke="#a6a6a6" fill="none" stroke-width="0.8" /><path d="M915.5 213.6 H920.5 L922.5 215.6 V220.6 H915.5 Z" stroke="#a6a6a6" fill="#f6f6f6" stroke-width="1" /><path d="M920.5 213.6 V215.6 H922.5" stroke="#a6a6a6" fill="none" stroke-width="0.8" /><path d="M926.5 212.6 H929.5 M917.5 218 H920.5" stroke="#a6a6a6" fill="none" stroke-width="1" /><path d="M924.4 218.6 H928.4 M926 217 L924.4 218.6 L926 220.2" stroke="#a6a6a6" fill="none" stroke-width="0.9" /><path d="M824.2 250.5 H834.8000000000001" stroke="#707070" fill="none" stroke-width="1" /><path d="M823.8000000000001 250.5 L826.2 248.8 V252.2 Z M835.2 250.5 L832.8000000000001 248.8 V252.2 Z" stroke="none" fill="#707070" stroke-width="1" /><path d="M826.6 245.4 L831.4 239.6 M826.2 242.6 V245.8 H829.4 M828.6 239.2 H831.8 V242.4" stroke="#8a8a8a" fill="none" stroke-width="1" /><path d="M834.5 236.2 H839.5 L841.5 238.2 V243.2 H834.5 Z" stroke="#a6a6a6" fill="#f6f6f6" stroke-width="1" /><path d="M839.5 236.2 V238.2 H841.5" stroke="#a6a6a6" fill="none" stroke-width="0.8" /><path d="M836.5 240.6 H839.5" stroke="#a6a6a6" fill="none" stroke-width="1" /><path d="M856.4 238.8 Q852.4 239.4 853.1999999999999 245" stroke="#a6a6a6" fill="none" stroke-width="1" /><path d="M851.1999999999999 243.4 L853.1999999999999 246 L855.1999999999999 243.4" stroke="#a6a6a6" fill="none" stroke-width="1" /><path d="M859.5 236.2 H864.5 L866.5 238.2 V243.2 H859.5 Z" stroke="#a6a6a6" fill="#f6f6f6" stroke-width="1" /><path d="M864.5 236.2 V238.2 H866.5" stroke="#a6a6a6" fill="none" stroke-width="0.8" /><path d="M861.5 240.6 H864.5" stroke="#a6a6a6" fill="none" stroke-width="1" /><text x="850.6" y="252.6" font-family="Liberation Sans, sans-serif" font-size="10" fill="#a6a6a6" textLength="10" lengthAdjust="spacingAndGlyphs">all</text><path d="M876.2 250.5 H886.8000000000001" stroke="#707070" fill="none" stroke-width="1" /><path d="M875.8000000000001 250.5 L878.2 248.8 V252.2 Z M887.2 250.5 L884.8000000000001 248.8 V252.2 Z" stroke="none" fill="#707070" stroke-width="1" /><path d="M882.6 238.8 Q878.6 239.4 879.4 245" stroke="#a6a6a6" fill="none" stroke-width="1" /><path d="M877.4 243.4 L879.4 246 L881.4 243.4" stroke="#a6a6a6" fill="none" stroke-width="1" /><path d="M886.5 236.2 H891.5 L893.5 238.2 V243.2 H886.5 Z" stroke="#a6a6a6" fill="#f6f6f6" stroke-width="1" /><path d="M891.5 236.2 V238.2 H893.5" stroke="#a6a6a6" fill="none" stroke-width="0.8" /><path d="M887 236.6 L893.4 243 M893.4 236.6 L887 243" stroke="#8a8a8a" fill="none" stroke-width="1" /><path d="M902.4 250.5 H913.0" stroke="#707070" fill="none" stroke-width="1" /><path d="M902.0 250.5 L904.4 248.8 V252.2 Z M913.4 250.5 L911.0 248.8 V252.2 Z" stroke="none" fill="#707070" stroke-width="1" /><path d="M908.8000000000001 238.8 Q904.8000000000001 239.4 905.6 245" stroke="#a6a6a6" fill="none" stroke-width="1" /><path d="M903.6 243.4 L905.6 246 L907.6 243.4" stroke="#a6a6a6" fill="none" stroke-width="1" /><path d="M912.5 236.2 H917.5 L919.5 238.2 V243.2 H912.5 Z" stroke="#a6a6a6" fill="#f6f6f6" stroke-width="1" /><path d="M917.5 236.2 V238.2 H919.5" stroke="#a6a6a6" fill="none" stroke-width="0.8" /><path d="M914.5 240.6 H917.5" stroke="#a6a6a6" fill="none" stroke-width="1" /></svg>
<svg class="a" style="left:0;top:0" width="983" height="703" viewBox="0 0 983 703"><g font-family="Liberation Sans, sans-serif" font-size="9.8" letter-spacing="0.26" shape-rendering="crispEdges"><path d="M103 283.5 H704.5" stroke="#000080" fill="none"/><path d="M152.0 267.5 H291.0 M152.5 267.5 V280 M151.0 278.5 H154.0 M152.0 279.5 H153.0 M150.0 277.5 H151.0 M158.5 267.5 V280 M157.0 278.5 H160.0 M158.0 279.5 H159.0 M156.0 277.5 H157.0 M164.5 267.5 V280 M163.0 278.5 H166.0 M164.0 279.5 H165.0 M162.0 277.5 H163.0 M170.5 267.5 V280 M169.0 278.5 H172.0 M170.0 279.5 H171.0 M168.0 277.5 H169.0 M176.5 267.5 V280 M175.0 278.5 H178.0 M176.0 279.5 H177.0 M174.0 277.5 H175.0 M182.5 267.5 V280 M181.0 278.5 H184.0 M182.0 279.5 H183.0 M180.0 277.5 H181.0 M188.5 267.5 V280 M187.0 278.5 H190.0 M188.0 279.5 H189.0 M186.0 277.5 H187.0 M194.5 267.5 V280 M193.0 278.5 H196.0 M194.0 279.5 H195.0 M192.0 277.5 H193.0 M200.5 267.5 V280 M199.0 278.5 H202.0 M200.0 279.5 H201.0 M198.0 277.5 H199.0 M206.5 267.5 V280 M205.0 278.5 H208.0 M206.0 279.5 H207.0 M204.0 277.5 H205.0 M212.5 267.5 V280 M211.0 278.5 H214.0 M212.0 279.5 H213.0 M210.0 277.5 H211.0 M218.5 267.5 V280 M217.0 278.5 H220.0 M218.0 279.5 H219.0 M216.0 277.5 H217.0 M224.5 267.5 V280 M223.0 278.5 H226.0 M224.0 279.5 H225.0 M222.0 277.5 H223.0 M230.5 267.5 V280 M229.0 278.5 H232.0 M230.0 279.5 H231.0 M228.0 277.5 H229.0 M236.5 267.5 V280 M235.0 278.5 H238.0 M236.0 279.5 H237.0 M234.0 277.5 H235.0 M242.5 267.5 V280 M241.0 278.5 H244.0 M242.0 279.5 H243.0 M240.0 277.5 H241.0 M248.5 267.5 V280 M247.0 278.5 H250.0 M248.0 279.5 H249.0 M246.0 277.5 H247.0 M254.5 267.5 V280 M253.0 278.5 H256.0 M254.0 279.5 H255.0 M252.0 277.5 H253.0 M260.5 267.5 V280 M259.0 278.5 H262.0 M260.0 279.5 H261.0 M258.0 277.5 H259.0 M266.5 267.5 V280 M265.0 278.5 H268.0 M266.0 279.5 H267.0 M264.0 277.5 H265.0 M272.5 267.5 V280 M271.0 278.5 H274.0 M272.0 279.5 H273.0 M270.0 277.5 H271.0 M278.5 267.5 V280 M277.0 278.5 H280.0 M278.0 279.5 H279.0 M276.0 277.5 H277.0 M284.5 267.5 V280 M283.0 278.5 H286.0 M284.0 279.5 H285.0 M282.0 277.5 H283.0 M290.5 267.5 V280 M289.0 278.5 H292.0 M290.0 279.5 H291.0 M288.0 277.5 H289.0" stroke="#000080" fill="none"/><text transform="translate(228.6 265.5) rotate(-90)" fill="#000080" stroke="#000080" stroke-width="0.12">12.0 kN/m</text><path d="M330.0 267.5 H485.0 M330.5 267.5 V280 M329.0 278.5 H332.0 M330.0 279.5 H331.0 M328.0 277.5 H329.0 M336.5 267.5 V280 M335.0 278.5 H338.0 M336.0 279.5 H337.0 M334.0 277.5 H335.0 M342.5 267.5 V280 M341.0 278.5 H344.0 M342.0 279.5 H343.0 M340.0 277.5 H341.0 M348.5 267.5 V280 M347.0 278.5 H350.0 M348.0 279.5 H349.0 M346.0 277.5 H347.0 M354.5 267.5 V280 M353.0 278.5 H356.0 M354.0 279.5 H355.0 M352.0 277.5 H353.0 M360.5 267.5 V280 M359.0 278.5 H362.0 M360.0 279.5 H361.0 M358.0 277.5 H359.0 M366.5 267.5 V280 M365.0 278.5 H368.0 M366.0 279.5 H367.0 M364.0 277.5 H365.0 M372.5 267.5 V280 M371.0 278.5 H374.0 M372.0 279.5 H373.0 M370.0 277.5 H371.0 M378.5 267.5 V280 M377.0 278.5 H380.0 M378.0 279.5 H379.0 M376.0 277.5 H377.0 M384.5 267.5 V280 M383.0 278.5 H386.0 M384.0 279.5 H385.0 M382.0 277.5 H383.0 M390.5 267.5 V280 M389.0 278.5 H392.0 M390.0 279.5 H391.0 M388.0 277.5 H389.0 M396.5 267.5 V280 M395.0 278.5 H398.0 M396.0 279.5 H397.0 M394.0 277.5 H395.0 M402.5 267.5 V280 M401.0 278.5 H404.0 M402.0 279.5 H403.0 M400.0 277.5 H401.0 M408.5 267.5 V280 M407.0 278.5 H410.0 M408.0 279.5 H409.0 M406.0 277.5 H407.0 M413.5 267.5 V280 M412.0 278.5 H415.0 M413.0 279.5 H414.0 M411.0 277.5 H412.0 M419.5 267.5 V280 M418.0 278.5 H421.0 M419.0 279.5 H420.0 M417.0 277.5 H418.0 M425.5 267.5 V280 M424.0 278.5 H427.0 M425.0 279.5 H426.0 M423.0 277.5 H424.0 M431.5 267.5 V280 M430.0 278.5 H433.0 M431.0 279.5 H432.0 M429.0 277.5 H430.0 M437.5 267.5 V280 M436.0 278.5 H439.0 M437.0 279.5 H438.0 M435.0 277.5 H436.0 M443.5 267.5 V280 M442.0 278.5 H445.0 M443.0 279.5 H444.0 M441.0 277.5 H442.0 M449.5 267.5 V280 M448.0 278.5 H451.0 M449.0 279.5 H450.0 M447.0 277.5 H448.0 M455.5 267.5 V280 M454.0 278.5 H457.0 M455.0 279.5 H456.0 M453.0 277.5 H454.0 M461.5 267.5 V280 M460.0 278.5 H463.0 M461.0 279.5 H462.0 M459.0 277.5 H460.0 M467.5 267.5 V280 M466.0 278.5 H469.0 M467.0 279.5 H468.0 M465.0 277.5 H466.0 M473.5 267.5 V280 M472.0 278.5 H475.0 M473.0 279.5 H474.0 M471.0 277.5 H472.0 M479.5 267.5 V280 M478.0 278.5 H481.0 M479.0 279.5 H480.0 M477.0 277.5 H478.0 M484.5 267.5 V280 M483.0 278.5 H486.0 M484.0 279.5 H485.0 M482.0 277.5 H483.0" stroke="#000080" fill="none"/><text transform="translate(412.1 265.5) rotate(-90)" fill="#000080" stroke="#000080" stroke-width="0.12">12.0 kN/m</text><path d="M655.0 267.5 H705.0 M656.5 267.5 V280 M655.0 278.5 H658.0 M656.0 279.5 H657.0 M654.0 277.5 H655.0 M662.5 267.5 V280 M661.0 278.5 H664.0 M662.0 279.5 H663.0 M660.0 277.5 H661.0 M668.5 267.5 V280 M667.0 278.5 H670.0 M668.0 279.5 H669.0 M666.0 277.5 H667.0 M674.5 267.5 V280 M673.0 278.5 H676.0 M674.0 279.5 H675.0 M672.0 277.5 H673.0 M680.5 267.5 V280 M679.0 278.5 H682.0 M680.0 279.5 H681.0 M678.0 277.5 H679.0 M686.5 267.5 V280 M685.0 278.5 H688.0 M686.0 279.5 H687.0 M684.0 277.5 H685.0 M692.5 267.5 V280 M691.0 278.5 H694.0 M692.0 279.5 H693.0 M690.0 277.5 H691.0 M698.5 267.5 V280 M697.0 278.5 H700.0 M698.0 279.5 H699.0 M696.0 277.5 H697.0 M704.5 267.5 V280 M703.0 278.5 H706.0 M704.0 279.5 H705.0 M702.0 277.5 H703.0" stroke="#000080" fill="none"/><text transform="translate(686.3 265.5) rotate(-90)" fill="#000080" stroke="#000080" stroke-width="0.12">12.0 kN/m</text><path d="M295.0 256 V272" stroke="#0000ff" fill="none"/><path d="M291.5 272 H298.5 L295.0 278.5 Z" fill="#0000ff" shape-rendering="geometricPrecision"/><text transform="translate(293.5 268.4) rotate(-90)" fill="#0000ff" stroke="#0000ff" stroke-width="0.12" font-size="9.8" letter-spacing="0">360 kN</text><path d="M305.0 256 V272" stroke="#0000ff" fill="none"/><path d="M301.5 272 H308.5 L305.0 278.5 Z" fill="#0000ff" shape-rendering="geometricPrecision"/><text transform="translate(303.5 268.4) rotate(-90)" fill="#0000ff" stroke="#0000ff" stroke-width="0.12" font-size="9.8" letter-spacing="0">360 kN</text><path d="M315.0 256 V272" stroke="#0000ff" fill="none"/><path d="M311.5 272 H318.5 L315.0 278.5 Z" fill="#0000ff" shape-rendering="geometricPrecision"/><text transform="translate(313.5 268.4) rotate(-90)" fill="#0000ff" stroke="#0000ff" stroke-width="0.12" font-size="9.8" letter-spacing="0">360 kN</text><path d="M325.0 256 V272" stroke="#0000ff" fill="none"/><path d="M321.5 272 H328.5 L325.0 278.5 Z" fill="#0000ff" shape-rendering="geometricPrecision"/><text transform="translate(323.5 268.4) rotate(-90)" fill="#0000ff" stroke="#0000ff" stroke-width="0.12" font-size="9.8" letter-spacing="0">360 kN</text><path d="M290.0 274.5 H331.0 M290.5 274.5 V280 M289.0 278.5 H292.0 M290.0 279.5 H291.0 M288.0 277.5 H289.0 M297.5 274.5 V280 M296.0 278.5 H299.0 M297.0 279.5 H298.0 M295.0 277.5 H296.0 M304.5 274.5 V280 M303.0 278.5 H306.0 M304.0 279.5 H305.0 M302.0 277.5 H303.0 M310.5 274.5 V280 M309.0 278.5 H312.0 M310.0 279.5 H311.0 M308.0 277.5 H309.0 M317.5 274.5 V280 M316.0 278.5 H319.0 M317.0 279.5 H318.0 M315.0 277.5 H316.0 M324.5 274.5 V280 M323.0 278.5 H326.0 M324.0 279.5 H325.0 M322.0 277.5 H323.0 M330.5 274.5 V280 M329.0 278.5 H332.0 M330.0 279.5 H331.0 M328.0 277.5 H329.0" stroke="#000080" fill="none"/><text transform="translate(318.3 272.4) rotate(-90)" fill="#000060" stroke="#000060" stroke-width="0.12">4.8 kN/m</text><path d="M103 544.5 H704.5" stroke="#000080" fill="none"/><path d="M103.0 528.5 H153.0 M104.5 528.5 V541 M103.0 539.5 H106.0 M104.0 540.5 H105.0 M102.0 538.5 H103.0 M110.5 528.5 V541 M109.0 539.5 H112.0 M110.0 540.5 H111.0 M108.0 538.5 H109.0 M116.5 528.5 V541 M115.0 539.5 H118.0 M116.0 540.5 H117.0 M114.0 538.5 H115.0 M122.5 528.5 V541 M121.0 539.5 H124.0 M122.0 540.5 H123.0 M120.0 538.5 H121.0 M128.5 528.5 V541 M127.0 539.5 H130.0 M128.0 540.5 H129.0 M126.0 538.5 H127.0 M134.5 528.5 V541 M133.0 539.5 H136.0 M134.0 540.5 H135.0 M132.0 538.5 H133.0 M140.5 528.5 V541 M139.0 539.5 H142.0 M140.0 540.5 H141.0 M138.0 538.5 H139.0 M146.5 528.5 V541 M145.0 539.5 H148.0 M146.0 540.5 H147.0 M144.0 538.5 H145.0 M152.5 528.5 V541 M151.0 539.5 H154.0 M152.0 540.5 H153.0 M150.0 538.5 H151.0" stroke="#000080" fill="none"/><text transform="translate(133.6 526.5) rotate(-90)" fill="#000080" stroke="#000080" stroke-width="0.12">12.0 kN/m</text><path d="M484.0 528.5 H527.0 M484.5 528.5 V541 M483.0 539.5 H486.0 M484.0 540.5 H485.0 M482.0 538.5 H483.0 M490.5 528.5 V541 M489.0 539.5 H492.0 M490.0 540.5 H491.0 M488.0 538.5 H489.0 M496.5 528.5 V541 M495.0 539.5 H498.0 M496.0 540.5 H497.0 M494.0 538.5 H495.0 M502.5 528.5 V541 M501.0 539.5 H504.0 M502.0 540.5 H503.0 M500.0 538.5 H501.0 M508.5 528.5 V541 M507.0 539.5 H510.0 M508.0 540.5 H509.0 M506.0 538.5 H507.0 M514.5 528.5 V541 M513.0 539.5 H516.0 M514.0 540.5 H515.0 M512.0 538.5 H513.0 M520.5 528.5 V541 M519.0 539.5 H522.0 M520.0 540.5 H521.0 M518.0 538.5 H519.0 M526.5 528.5 V541 M525.0 539.5 H528.0 M526.0 540.5 H527.0 M524.0 538.5 H525.0" stroke="#000080" fill="none"/><text transform="translate(512.6 526.5) rotate(-90)" fill="#000080" stroke="#000080" stroke-width="0.12">12.0 kN/m</text><path d="M566.0 528.5 H656.0 M566.5 528.5 V541 M565.0 539.5 H568.0 M566.0 540.5 H567.0 M564.0 538.5 H565.0 M572.5 528.5 V541 M571.0 539.5 H574.0 M572.0 540.5 H573.0 M570.0 538.5 H571.0 M578.5 528.5 V541 M577.0 539.5 H580.0 M578.0 540.5 H579.0 M576.0 538.5 H577.0 M584.5 528.5 V541 M583.0 539.5 H586.0 M584.0 540.5 H585.0 M582.0 538.5 H583.0 M590.5 528.5 V541 M589.0 539.5 H592.0 M590.0 540.5 H591.0 M588.0 538.5 H589.0 M596.5 528.5 V541 M595.0 539.5 H598.0 M596.0 540.5 H597.0 M594.0 538.5 H595.0 M602.5 528.5 V541 M601.0 539.5 H604.0 M602.0 540.5 H603.0 M600.0 538.5 H601.0 M608.5 528.5 V541 M607.0 539.5 H610.0 M608.0 540.5 H609.0 M606.0 538.5 H607.0 M614.5 528.5 V541 M613.0 539.5 H616.0 M614.0 540.5 H615.0 M612.0 538.5 H613.0 M620.5 528.5 V541 M619.0 539.5 H622.0 M620.0 540.5 H621.0 M618.0 538.5 H619.0 M626.5 528.5 V541 M625.0 539.5 H628.0 M626.0 540.5 H627.0 M624.0 538.5 H625.0 M632.5 528.5 V541 M631.0 539.5 H634.0 M632.0 540.5 H633.0 M630.0 538.5 H631.0 M638.5 528.5 V541 M637.0 539.5 H640.0 M638.0 540.5 H639.0 M636.0 538.5 H637.0 M644.5 528.5 V541 M643.0 539.5 H646.0 M644.0 540.5 H645.0 M642.0 538.5 H643.0 M650.5 528.5 V541 M649.0 539.5 H652.0 M650.0 540.5 H651.0 M648.0 538.5 H649.0 M656.5 528.5 V541 M655.0 539.5 H658.0 M656.0 540.5 H657.0 M654.0 538.5 H655.0" stroke="#000080" fill="none"/><text transform="translate(617.0 526.5) rotate(-90)" fill="#000080" stroke="#000080" stroke-width="0.12">12.0 kN/m</text><path d="M531.0 517 V533" stroke="#0000ff" fill="none"/><path d="M527.5 533 H534.5 L531.0 539.5 Z" fill="#0000ff" shape-rendering="geometricPrecision"/><text transform="translate(529.5 529.4) rotate(-90)" fill="#0000ff" stroke="#0000ff" stroke-width="0.12" font-size="9.8" letter-spacing="0">360 kN</text><path d="M541.0 517 V533" stroke="#0000ff" fill="none"/><path d="M537.5 533 H544.5 L541.0 539.5 Z" fill="#0000ff" shape-rendering="geometricPrecision"/><text transform="translate(539.5 529.4) rotate(-90)" fill="#0000ff" stroke="#0000ff" stroke-width="0.12" font-size="9.8" letter-spacing="0">360 kN</text><path d="M551.0 517 V533" stroke="#0000ff" fill="none"/><path d="M547.5 533 H554.5 L551.0 539.5 Z" fill="#0000ff" shape-rendering="geometricPrecision"/><text transform="translate(549.5 529.4) rotate(-90)" fill="#0000ff" stroke="#0000ff" stroke-width="0.12" font-size="9.8" letter-spacing="0">360 kN</text><path d="M561.0 517 V533" stroke="#0000ff" fill="none"/><path d="M557.5 533 H564.5 L561.0 539.5 Z" fill="#0000ff" shape-rendering="geometricPrecision"/><text transform="translate(559.5 529.4) rotate(-90)" fill="#0000ff" stroke="#0000ff" stroke-width="0.12" font-size="9.8" letter-spacing="0">360 kN</text><path d="M526.0 535.5 H567.0 M526.5 535.5 V541 M525.0 539.5 H528.0 M526.0 540.5 H527.0 M524.0 538.5 H525.0 M533.5 535.5 V541 M532.0 539.5 H535.0 M533.0 540.5 H534.0 M531.0 538.5 H532.0 M540.5 535.5 V541 M539.0 539.5 H542.0 M540.0 540.5 H541.0 M538.0 538.5 H539.0 M546.5 535.5 V541 M545.0 539.5 H548.0 M546.0 540.5 H547.0 M544.0 538.5 H545.0 M553.5 535.5 V541 M552.0 539.5 H555.0 M553.0 540.5 H554.0 M551.0 538.5 H552.0 M560.5 535.5 V541 M559.0 539.5 H562.0 M560.0 540.5 H561.0 M558.0 538.5 H559.0 M566.5 535.5 V541 M565.0 539.5 H568.0 M566.0 540.5 H567.0 M564.0 538.5 H565.0" stroke="#000080" fill="none"/><text transform="translate(554.3 533.4) rotate(-90)" fill="#000060" stroke="#000060" stroke-width="0.12">4.8 kN/m</text><path d="M103 381.5 H705" stroke="#747400" fill="none"/><path d="M153.5 381.5 V412" stroke="#747400" fill="none"/><path d="M293.5 381.5 V432" stroke="#747400" fill="none"/><path d="M484.5 381.5 V432" stroke="#747400" fill="none"/><path d="M654.5 381.5 V412" stroke="#747400" fill="none"/><path d="M123.5 381.5 V382.8 M133.5 381.5 V383.0 M143.5 381.5 V382.6 M163.5 381.5 V379.0 M173.5 381.5 V375.9 M183.5 381.5 V372.0 M193.5 381.5 V367.5 M203.5 381.5 V362.5 M213.5 381.5 V357.2 M223.5 381.5 V351.8 M233.5 381.5 V346.4 M243.5 381.5 V341.1 M253.5 381.5 V336.2 M263.5 381.5 V331.7 M273.5 381.5 V327.9 M283.5 381.5 V324.8 M293.5 381.5 V322.7 M293.5 381.5 V322.7 M303.5 381.5 V321.6 M313.5 381.5 V321.5 M323.5 381.5 V322.3 M333.5 381.5 V323.8 M343.5 381.5 V326.1 M353.5 381.5 V328.9 M363.5 381.5 V332.3 M373.5 381.5 V336.1 M383.5 381.5 V340.2 M393.5 381.5 V344.6 M403.5 381.5 V349.2 M413.5 381.5 V353.9 M423.5 381.5 V358.5 M433.5 381.5 V363.1 M443.5 381.5 V367.5 M453.5 381.5 V371.6 M463.5 381.5 V375.3 M473.5 381.5 V378.6 M493.5 381.5 V383.6 M503.5 381.5 V385.3 M513.5 381.5 V386.6 M523.5 381.5 V387.4 M533.5 381.5 V387.9 M543.5 381.5 V388.1 M553.5 381.5 V388.0 M563.5 381.5 V387.7 M573.5 381.5 V387.2 M583.5 381.5 V386.5 M593.5 381.5 V385.8 M603.5 381.5 V385.0 M613.5 381.5 V384.1 M623.5 381.5 V383.3 M633.5 381.5 V382.6 " stroke="#0000ff" fill="none"/><path d="M103.5 381.50 L113.5 382.27 L123.5 382.83 L133.5 383.00 L143.5 382.55 L153.5 381.30 L153.5 381.30 L163.5 379.03 L173.5 375.91 L183.5 372.00 L193.5 367.47 L203.5 362.49 L213.5 357.21 L223.5 351.79 L233.5 346.37 L243.5 341.12 L253.5 336.19 L263.5 331.73 L273.5 327.89 L283.5 324.84 L293.5 322.73 L293.5 322.73 L303.5 321.64 L313.5 321.52 L323.5 322.28 L333.5 323.82 L343.5 326.05 L353.5 328.90 L363.5 332.27 L373.5 336.08 L383.5 340.23 L393.5 344.64 L403.5 349.22 L413.5 353.88 L423.5 358.53 L433.5 363.09 L443.5 367.46 L453.5 371.56 L463.5 375.31 L473.5 378.61 L483.5 381.38 L483.5 381.38 L493.5 383.58 L503.5 385.30 L513.5 386.57 L523.5 387.43 L533.5 387.93 L543.5 388.12 L553.5 388.03 L563.5 387.71 L573.5 387.19 L583.5 386.54 L593.5 385.78 L603.5 384.97 L613.5 384.14 L623.5 383.34 L633.5 382.62 L643.5 382.00 L653.5 381.55 L653.5 381.55 L663.5 381.29 L673.5 381.19 L683.5 381.22 L693.5 381.34 L703.5 381.50" stroke="#0000ff" fill="none" stroke-width="1.2" shape-rendering="geometricPrecision"/><text transform="translate(116.1 418.2) rotate(-90)" fill="#ff0000" stroke="#ff0000" stroke-width="0.12" font-size="9.9" letter-spacing="0.48">0.0130</text><text transform="translate(126.1 418.7) rotate(-90)" fill="#ff0000" stroke="#ff0000" stroke-width="0.12" font-size="9.9" letter-spacing="0.48">0.0226</text><text transform="translate(136.1 418.9) rotate(-90)" fill="#ff0000" stroke="#ff0000" stroke-width="0.12" font-size="9.9" letter-spacing="0.48">0.0254</text><text transform="translate(146.1 418.5) rotate(-90)" fill="#ff0000" stroke="#ff0000" stroke-width="0.12" font-size="9.9" letter-spacing="0.48">0.0178</text><text transform="translate(149.2 381.1) rotate(-90)" fill="#ff0000" stroke="#ff0000" stroke-width="0.12" font-size="9.9" letter-spacing="0.48">-0.0034</text><text transform="translate(164.5 381.1) rotate(-90)" fill="#ff0000" stroke="#ff0000" stroke-width="0.12" font-size="9.9" letter-spacing="0.48">-0.0034</text><text transform="translate(166.1 378.8) rotate(-90)" fill="#ff0000" stroke="#ff0000" stroke-width="0.12" font-size="9.9" letter-spacing="0.48">-0.0418</text><text transform="translate(176.1 375.7) rotate(-90)" fill="#ff0000" stroke="#ff0000" stroke-width="0.12" font-size="9.9" letter-spacing="0.48">-0.0948</text><text transform="translate(186.1 371.8) rotate(-90)" fill="#ff0000" stroke="#ff0000" stroke-width="0.12" font-size="9.9" letter-spacing="0.48">-0.1611</text><text transform="translate(196.1 367.3) rotate(-90)" fill="#ff0000" stroke="#ff0000" stroke-width="0.12" font-size="9.9" letter-spacing="0.48">-0.2378</text><text transform="translate(206.1 362.3) rotate(-90)" fill="#ff0000" stroke="#ff0000" stroke-width="0.12" font-size="9.9" letter-spacing="0.48">-0.3222</text><text transform="translate(216.1 357.0) rotate(-90)" fill="#ff0000" stroke="#ff0000" stroke-width="0.12" font-size="9.9" letter-spacing="0.48">-0.4117</text><text transform="translate(226.1 351.6) rotate(-90)" fill="#ff0000" stroke="#ff0000" stroke-width="0.12" font-size="9.9" letter-spacing="0.48">-0.5036</text><text transform="translate(236.1 346.2) rotate(-90)" fill="#ff0000" stroke="#ff0000" stroke-width="0.12" font-size="9.9" letter-spacing="0.48">-0.5954</text><text transform="translate(246.1 340.9) rotate(-90)" fill="#ff0000" stroke="#ff0000" stroke-width="0.12" font-size="9.9" letter-spacing="0.48">-0.6844</text><text transform="translate(256.1 336.0) rotate(-90)" fill="#ff0000" stroke="#ff0000" stroke-width="0.12" font-size="9.9" letter-spacing="0.48">-0.7680</text><text transform="translate(266.1 331.5) rotate(-90)" fill="#ff0000" stroke="#ff0000" stroke-width="0.12" font-size="9.9" letter-spacing="0.48">-0.8436</text><text transform="translate(276.1 327.7) rotate(-90)" fill="#ff0000" stroke="#ff0000" stroke-width="0.12" font-size="9.9" letter-spacing="0.48">-0.9086</text><text transform="translate(286.1 324.6) rotate(-90)" fill="#ff0000" stroke="#ff0000" stroke-width="0.12" font-size="9.9" letter-spacing="0.48">-0.9603</text><text transform="translate(289.2 322.5) rotate(-90)" fill="#ff0000" stroke="#ff0000" stroke-width="0.12" font-size="9.9" letter-spacing="0.48">-0.9961</text><text transform="translate(304.5 322.5) rotate(-90)" fill="#ff0000" stroke="#ff0000" stroke-width="0.12" font-size="9.9" letter-spacing="0.48">-0.9961</text><text transform="translate(306.1 321.4) rotate(-90)" fill="#ff0000" stroke="#ff0000" stroke-width="0.12" font-size="9.9" letter-spacing="0.48">-1.0145</text><text transform="translate(316.1 321.3) rotate(-90)" fill="#ff0000" stroke="#ff0000" stroke-width="0.12" font-size="9.9" letter-spacing="0.48">-1.0166</text><text transform="translate(326.1 322.1) rotate(-90)" fill="#ff0000" stroke="#ff0000" stroke-width="0.12" font-size="9.9" letter-spacing="0.48">-1.0038</text><text transform="translate(336.1 323.6) rotate(-90)" fill="#ff0000" stroke="#ff0000" stroke-width="0.12" font-size="9.9" letter-spacing="0.48">-0.9777</text><text transform="translate(346.1 325.9) rotate(-90)" fill="#ff0000" stroke="#ff0000" stroke-width="0.12" font-size="9.9" letter-spacing="0.48">-0.9398</text><text transform="translate(356.1 328.7) rotate(-90)" fill="#ff0000" stroke="#ff0000" stroke-width="0.12" font-size="9.9" letter-spacing="0.48">-0.8915</text><text transform="translate(366.1 332.1) rotate(-90)" fill="#ff0000" stroke="#ff0000" stroke-width="0.12" font-size="9.9" letter-spacing="0.48">-0.8344</text><text transform="translate(376.1 335.9) rotate(-90)" fill="#ff0000" stroke="#ff0000" stroke-width="0.12" font-size="9.9" letter-spacing="0.48">-0.7699</text><text transform="translate(386.1 340.0) rotate(-90)" fill="#ff0000" stroke="#ff0000" stroke-width="0.12" font-size="9.9" letter-spacing="0.48">-0.6995</text><text transform="translate(396.1 344.4) rotate(-90)" fill="#ff0000" stroke="#ff0000" stroke-width="0.12" font-size="9.9" letter-spacing="0.48">-0.6248</text><text transform="translate(406.1 349.0) rotate(-90)" fill="#ff0000" stroke="#ff0000" stroke-width="0.12" font-size="9.9" letter-spacing="0.48">-0.5472</text><text transform="translate(416.1 353.7) rotate(-90)" fill="#ff0000" stroke="#ff0000" stroke-width="0.12" font-size="9.9" letter-spacing="0.48">-0.4682</text><text transform="translate(426.1 358.3) rotate(-90)" fill="#ff0000" stroke="#ff0000" stroke-width="0.12" font-size="9.9" letter-spacing="0.48">-0.3894</text><text transform="translate(436.1 362.9) rotate(-90)" fill="#ff0000" stroke="#ff0000" stroke-width="0.12" font-size="9.9" letter-spacing="0.48">-0.3121</text><text transform="translate(446.1 367.3) rotate(-90)" fill="#ff0000" stroke="#ff0000" stroke-width="0.12" font-size="9.9" letter-spacing="0.48">-0.2379</text><text transform="translate(456.1 371.4) rotate(-90)" fill="#ff0000" stroke="#ff0000" stroke-width="0.12" font-size="9.9" letter-spacing="0.48">-0.1684</text><text transform="translate(466.1 375.1) rotate(-90)" fill="#ff0000" stroke="#ff0000" stroke-width="0.12" font-size="9.9" letter-spacing="0.48">-0.1049</text><text transform="translate(476.1 378.4) rotate(-90)" fill="#ff0000" stroke="#ff0000" stroke-width="0.12" font-size="9.9" letter-spacing="0.48">-0.0490</text><text transform="translate(479.2 381.2) rotate(-90)" fill="#ff0000" stroke="#ff0000" stroke-width="0.12" font-size="9.9" letter-spacing="0.48">-0.0021</text><text transform="translate(494.5 381.2) rotate(-90)" fill="#ff0000" stroke="#ff0000" stroke-width="0.12" font-size="9.9" letter-spacing="0.48">-0.0021</text><text transform="translate(496.1 419.5) rotate(-90)" fill="#ff0000" stroke="#ff0000" stroke-width="0.12" font-size="9.9" letter-spacing="0.48">0.0353</text><text transform="translate(506.1 421.2) rotate(-90)" fill="#ff0000" stroke="#ff0000" stroke-width="0.12" font-size="9.9" letter-spacing="0.48">0.0644</text><text transform="translate(516.1 422.5) rotate(-90)" fill="#ff0000" stroke="#ff0000" stroke-width="0.12" font-size="9.9" letter-spacing="0.48">0.0859</text><text transform="translate(526.1 423.3) rotate(-90)" fill="#ff0000" stroke="#ff0000" stroke-width="0.12" font-size="9.9" letter-spacing="0.48">0.1005</text><text transform="translate(536.1 423.8) rotate(-90)" fill="#ff0000" stroke="#ff0000" stroke-width="0.12" font-size="9.9" letter-spacing="0.48">0.1090</text><text transform="translate(546.1 424.0) rotate(-90)" fill="#ff0000" stroke="#ff0000" stroke-width="0.12" font-size="9.9" letter-spacing="0.48">0.1122</text><text transform="translate(556.1 423.9) rotate(-90)" fill="#ff0000" stroke="#ff0000" stroke-width="0.12" font-size="9.9" letter-spacing="0.48">0.1106</text><text transform="translate(566.1 423.6) rotate(-90)" fill="#ff0000" stroke="#ff0000" stroke-width="0.12" font-size="9.9" letter-spacing="0.48">0.1052</text><text transform="translate(576.1 423.1) rotate(-90)" fill="#ff0000" stroke="#ff0000" stroke-width="0.12" font-size="9.9" letter-spacing="0.48">0.0965</text><text transform="translate(586.1 422.4) rotate(-90)" fill="#ff0000" stroke="#ff0000" stroke-width="0.12" font-size="9.9" letter-spacing="0.48">0.0855</text><text transform="translate(596.1 421.7) rotate(-90)" fill="#ff0000" stroke="#ff0000" stroke-width="0.12" font-size="9.9" letter-spacing="0.48">0.0726</text><text transform="translate(606.1 420.9) rotate(-90)" fill="#ff0000" stroke="#ff0000" stroke-width="0.12" font-size="9.9" letter-spacing="0.48">0.0588</text><text transform="translate(616.1 420.0) rotate(-90)" fill="#ff0000" stroke="#ff0000" stroke-width="0.12" font-size="9.9" letter-spacing="0.48">0.0448</text><text transform="translate(626.1 419.2) rotate(-90)" fill="#ff0000" stroke="#ff0000" stroke-width="0.12" font-size="9.9" letter-spacing="0.48">0.0312</text><text transform="translate(636.1 418.5) rotate(-90)" fill="#ff0000" stroke="#ff0000" stroke-width="0.12" font-size="9.9" letter-spacing="0.48">0.0189</text><text transform="translate(646.1 417.9) rotate(-90)" fill="#ff0000" stroke="#ff0000" stroke-width="0.12" font-size="9.9" letter-spacing="0.48">0.0085</text><text transform="translate(649.2 417.4) rotate(-90)" fill="#ff0000" stroke="#ff0000" stroke-width="0.12" font-size="9.9" letter-spacing="0.48">0.0008</text><text transform="translate(664.5 417.4) rotate(-90)" fill="#ff0000" stroke="#ff0000" stroke-width="0.12" font-size="9.9" letter-spacing="0.48">0.0008</text><text transform="translate(666.1 381.1) rotate(-90)" fill="#ff0000" stroke="#ff0000" stroke-width="0.12" font-size="9.9" letter-spacing="0.48">-0.0036</text><text transform="translate(676.1 381.0) rotate(-90)" fill="#ff0000" stroke="#ff0000" stroke-width="0.12" font-size="9.9" letter-spacing="0.48">-0.0052</text><text transform="translate(686.1 381.0) rotate(-90)" fill="#ff0000" stroke="#ff0000" stroke-width="0.12" font-size="9.9" letter-spacing="0.48">-0.0047</text><text transform="translate(696.1 381.1) rotate(-90)" fill="#ff0000" stroke="#ff0000" stroke-width="0.12" font-size="9.9" letter-spacing="0.48">-0.0027</text><g shape-rendering="geometricPrecision"><path d="M103.5 383.0 L99.1 390.5 H107.9 Z" stroke="#006400" fill="none" stroke-width="1.1"/><path d="M96.0 390.5 H110.0 M96.0 392.5 H110.0" stroke="#006400" fill="none" stroke-width="1" shape-rendering="crispEdges"/><path d="M704.5 383.0 L700.1 390.5 H708.9 Z" stroke="#006400" fill="none" stroke-width="1.1"/><path d="M697.0 390.5 H711.0 M697.0 392.5 H711.0" stroke="#006400" fill="none" stroke-width="1" shape-rendering="crispEdges"/><path d="M146.0 411.5 H162.0 M148.0 412.5 h1 M147.0 413.5 h1 M151.0 412.5 h1 M150.0 413.5 h1 M154.0 412.5 h1 M153.0 413.5 h1 M157.0 412.5 h1 M156.0 413.5 h1 M160.0 412.5 h1 M159.0 413.5 h1 M163.0 412.5 h1 M162.0 413.5 h1" stroke="#006400" fill="none" stroke-width="1" shape-rendering="crispEdges"/><path d="M286.0 431.5 H302.0 M288.0 432.5 h1 M287.0 433.5 h1 M291.0 432.5 h1 M290.0 433.5 h1 M294.0 432.5 h1 M293.0 433.5 h1 M297.0 432.5 h1 M296.0 433.5 h1 M300.0 432.5 h1 M299.0 433.5 h1 M303.0 432.5 h1 M302.0 433.5 h1" stroke="#006400" fill="none" stroke-width="1" shape-rendering="crispEdges"/><path d="M477.0 431.5 H493.0 M479.0 432.5 h1 M478.0 433.5 h1 M482.0 432.5 h1 M481.0 433.5 h1 M485.0 432.5 h1 M484.0 433.5 h1 M488.0 432.5 h1 M487.0 433.5 h1 M491.0 432.5 h1 M490.0 433.5 h1 M494.0 432.5 h1 M493.0 433.5 h1" stroke="#006400" fill="none" stroke-width="1" shape-rendering="crispEdges"/><path d="M647.0 411.5 H663.0 M649.0 412.5 h1 M648.0 413.5 h1 M652.0 412.5 h1 M651.0 413.5 h1 M655.0 412.5 h1 M654.0 413.5 h1 M658.0 412.5 h1 M657.0 413.5 h1 M661.0 412.5 h1 M660.0 413.5 h1 M664.0 412.5 h1 M663.0 413.5 h1" stroke="#006400" fill="none" stroke-width="1" shape-rendering="crispEdges"/><circle cx="103.5" cy="381.1" r="2.7" fill="#64640a"/><circle cx="153.5" cy="381.1" r="2.7" fill="#64640a"/><circle cx="293.5" cy="381.1" r="2.7" fill="#64640a"/><circle cx="484.5" cy="381.1" r="2.7" fill="#64640a"/><circle cx="654.5" cy="381.1" r="2.7" fill="#64640a"/><circle cx="704.5" cy="381.1" r="2.7" fill="#64640a"/><circle cx="153.5" cy="412.3" r="2.6" fill="#64640a"/><circle cx="293.5" cy="432.3" r="2.6" fill="#64640a"/><circle cx="484.5" cy="432.3" r="2.6" fill="#64640a"/><circle cx="654.5" cy="412.3" r="2.6" fill="#64640a"/><path d="M293.5 408.8 L296.7 412 L293.5 415.2 L290.3 412 Z" fill="#ff0000"/></g></g></svg>
</div>
</body></html>
